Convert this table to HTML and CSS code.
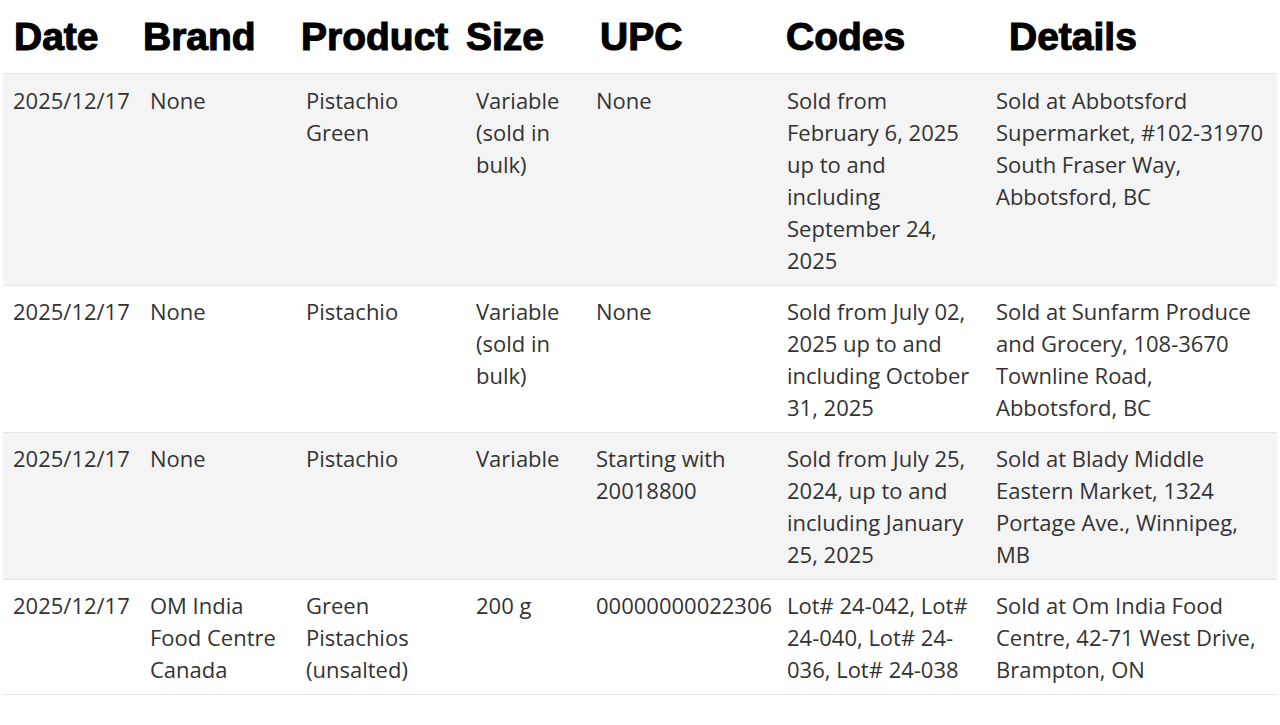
FILE: index.html
```html
<!DOCTYPE html>
<html>
<head>
<meta charset="utf-8">
<link rel="stylesheet" href="styles.css">
</head>
<body>
<div class="wrap">
<table class="recall">
  <colgroup>
    <col class="c-date"><col class="c-brand"><col class="c-product"><col class="c-size"><col class="c-upc"><col class="c-codes"><col class="c-details">
  </colgroup>
  <thead>
    <tr>
      <th class="h-date">Date</th>
      <th class="h-brand">Brand</th>
      <th class="h-product">Product</th>
      <th class="h-size">Size</th>
      <th class="h-upc">UPC</th>
      <th class="h-codes">Codes</th>
      <th class="h-details">Details</th>
    </tr>
  </thead>
  <tbody>
    <tr class="shade">
      <td>2025/12/17</td>
      <td>None</td>
      <td>Pistachio Green</td>
      <td>Variable (sold in bulk)</td>
      <td>None</td>
      <td>Sold from February 6, 2025 up to and including September 24, 2025</td>
      <td>Sold at Abbotsford Supermarket, #102-31970 South Fraser Way, Abbotsford, BC</td>
    </tr>
    <tr>
      <td>2025/12/17</td>
      <td>None</td>
      <td>Pistachio</td>
      <td>Variable (sold in bulk)</td>
      <td>None</td>
      <td>Sold from July 02, 2025 up to and including October 31, 2025</td>
      <td>Sold at Sunfarm Produce and Grocery, 108-3670 Townline Road, Abbotsford, BC</td>
    </tr>
    <tr class="shade">
      <td>2025/12/17</td>
      <td>None</td>
      <td>Pistachio</td>
      <td>Variable</td>
      <td>Starting with 20018800</td>
      <td>Sold from July 25, 2024, up to and including January 25, 2025</td>
      <td>Sold at Blady Middle Eastern Market, 1324 Portage Ave., Winnipeg, MB</td>
    </tr>
    <tr>
      <td>2025/12/17</td>
      <td>OM India Food Centre Canada</td>
      <td>Green Pistachios (unsalted)</td>
      <td>200 g</td>
      <td>00000000022306</td>
      <td>Lot# 24-042, Lot# 24-040, Lot# 24-036, Lot# 24-038</td>
      <td>Sold at Om India Food Centre, 42-71 West Drive, Brampton, ON</td>
    </tr>
  </tbody>
</table>
</div>
</body>
</html>
```
FILE: styles.css
```css
html, body {
  margin: 0;
  padding: 0;
  background: #ffffff;
}

.wrap {
  padding: 0 3px;
}

.recall {
  width: 1274px;
  border-collapse: collapse;
  table-layout: fixed;
  font-family: "Open Sans", "Noto Sans", sans-serif;
  font-size: 22px;
  line-height: 32px;
  color: #333333;
}

.c-date { width: 137px; }
.c-brand { width: 156px; }
.c-product { width: 170px; }
.c-size { width: 120px; }
.c-upc { width: 191px; }
.c-codes { width: 209px; }
.c-details { width: 291px; }

.recall th {
  font-family: "Liberation Sans", Arial, sans-serif;
  font-weight: bold;
  font-size: 39px;
  line-height: 44px;
  color: #000000;
  -webkit-text-stroke: 1.1px #000000;
  text-align: left;
  white-space: nowrap;
  padding: 15px 0 14px 0;
  height: 44px;
  border-bottom: 1px solid #e4e4e4;
  vertical-align: top;
}

.h-date { padding-left: 11px !important; }
.h-brand { padding-left: 3px !important; }
.h-product { padding-left: 5px !important; }
.h-size { padding-left: 0 !important; }
.h-upc { padding-left: 14px !important; }
.h-codes { padding-left: 9px !important; }
.h-details { padding-left: 23px !important; }

.recall td {
  padding: 9px 4px 9px 10px;
  vertical-align: top;
  border-bottom: 1px solid #e4e4e4;
  white-space: normal;
}

.recall tbody tr:first-child td {
  padding-top: 10px;
}

.recall tr.shade td {
  background: #f4f4f4;
}
```
